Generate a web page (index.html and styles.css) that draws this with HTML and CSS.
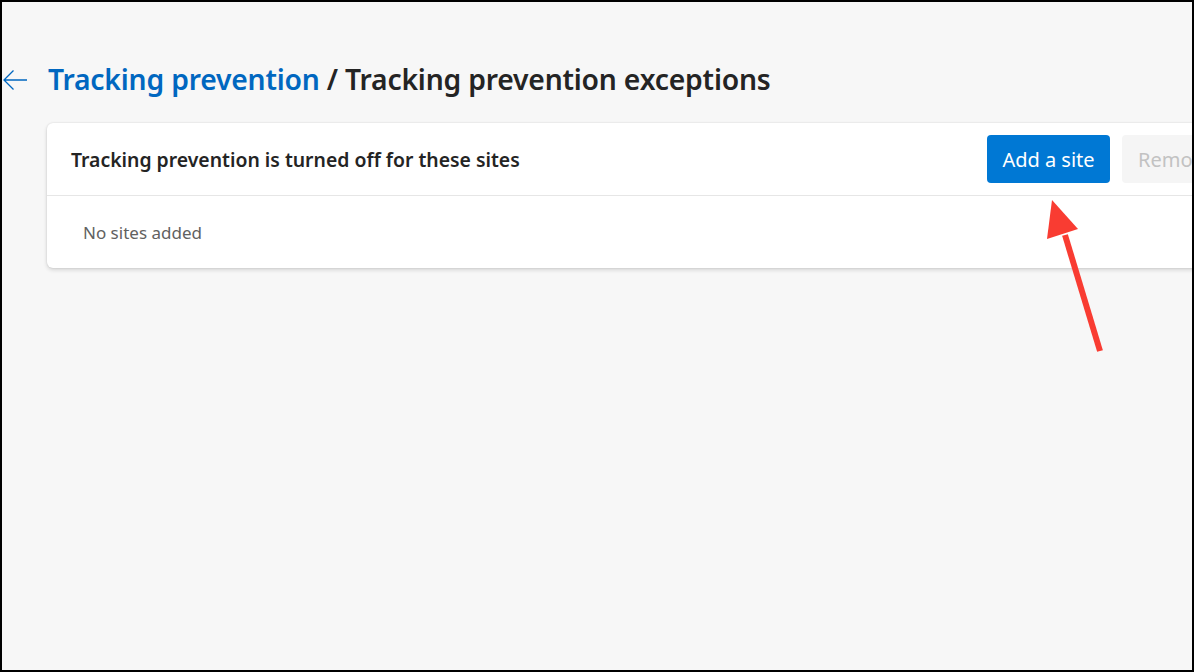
FILE: index.html
```html
<!DOCTYPE html>
<html>
<head>
<meta charset="utf-8">
<link rel="stylesheet" href="styles.css">
</head>
<body>
<div class="frame">
  <div class="page">
    <div class="title-row">
      <span class="back" aria-label="Back">
        <svg width="26" height="22" viewBox="0 0 26 22"><path d="M25 11H2M11.5 1.5L2 11l9.5 9.5" fill="none" stroke="#0067c0" stroke-width="1.3"/></svg>
      </span>
      <h1 class="title"><span class="crumb">Tracking prevention</span> / Tracking prevention exceptions</h1>
    </div>
    <section class="card">
      <div class="card-head">
        <h2 class="card-title">Tracking prevention is turned off for these sites</h2>
        <div class="actions">
          <button class="btn primary">Add a site</button>
          <button class="btn disabled">Remove all</button>
        </div>
      </div>
      <div class="card-body">
        <p class="empty">No sites added</p>
      </div>
    </section>
  </div>
  <svg class="annot" width="1194" height="672" viewBox="0 0 1194 672">
    <line x1="1100" y1="351" x2="1065" y2="235" stroke="#f93c32" stroke-width="6" stroke-linecap="butt"/>
    <polygon points="1052,200 1078,229 1047,239" fill="#f93c32"/>
  </svg>
</div>
</body>
</html>
```

FILE: styles.css
```css
html, body {
  margin: 0;
  padding: 0;
}
body {
  font-family: "Noto Sans", "Open Sans", sans-serif;
}
.frame {
  position: relative;
  width: 1194px;
  height: 672px;
  box-sizing: border-box;
  border: 2px solid #000;
  background: #f7f7f7;
  overflow: hidden;
}
.page {
  padding: 55px 0 0 0;
  width: 1400px;
}
.title-row {
  display: flex;
  align-items: center;
  height: 44px;
  margin-bottom: 2px;
}
.back {
  display: flex;
  width: 46px;
  margin-top: 2px;
}
.title {
  margin: 0;
  font-size: 28.3px;
  font-weight: 600;
  color: #242424;
  letter-spacing: -0.2px;
}
.crumb {
  color: #0067c0;
}
.card {
  margin: 22px 0 0 45px;
  background: #fff;
  border-radius: 6px;
  box-shadow: 0 0 2px rgba(0,0,0,0.12), 0 2px 4px rgba(0,0,0,0.14);
  width: 1260px;
}
.card-head {
  display: flex;
  align-items: center;
  height: 72px;
  padding: 0 0 0 24px;
  border-bottom: 1px solid #e6e6e6;
}
.card-title {
  margin: 0;
  flex: 1;
  font-size: 19.4px;
  font-weight: 600;
  color: #242424;
}
.actions {
  display: flex;
  gap: 12px;
  margin-right: 48px;
}
.btn {
  font-family: inherit;
  font-size: 20px;
  height: 48px;
  border-radius: 4px;
  border: none;
  padding: 0 16px;
}
.primary {
  background: #0078d4;
  color: #fff;
  width: 123px;
  padding: 0;
}
.disabled {
  background: #f5f5f5;
  color: #c2c2c2;
  width: 137px;
  text-align: left;
}
.card-body {
  height: 72px;
  display: flex;
  align-items: center;
  padding-left: 36px;
}
.empty {
  margin: 0;
  font-size: 17px;
  color: #616161;
}
.annot {
  position: absolute;
  left: -2px;
  top: -2px;
  pointer-events: none;
}
```
